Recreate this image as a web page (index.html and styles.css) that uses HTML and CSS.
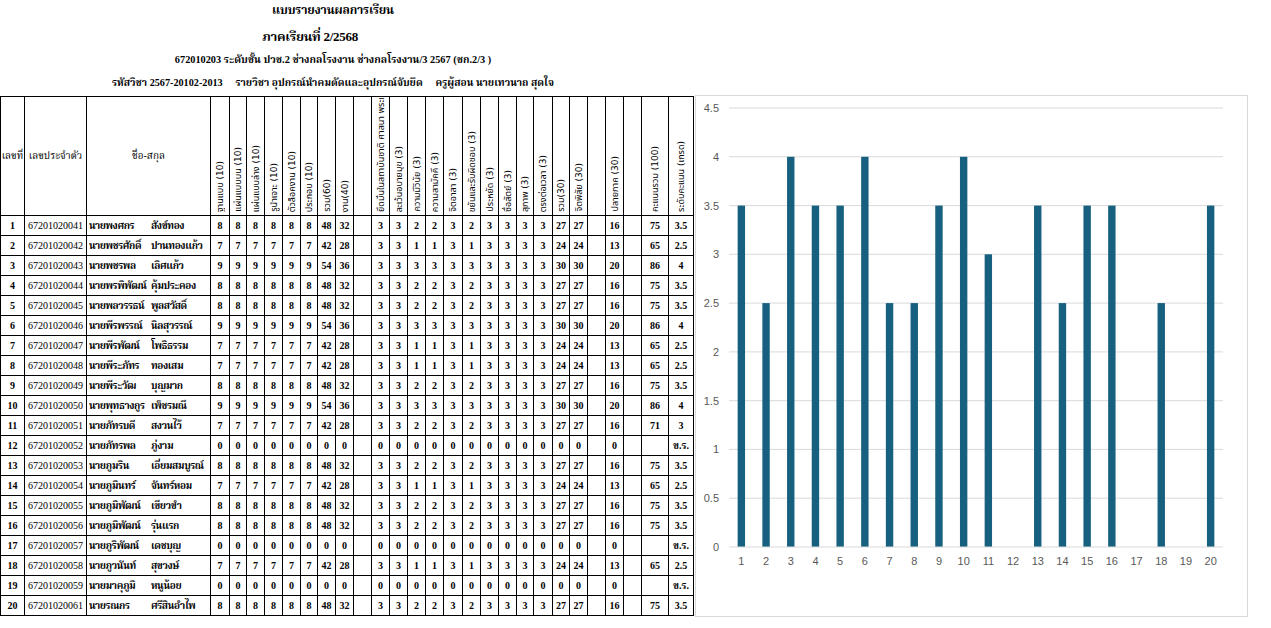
FILE: index.html
```html
<!DOCTYPE html>
<html lang="th">
<head>
<meta charset="utf-8">
<title>แบบรายงานผลการเรียน</title>
<link rel="stylesheet" href="styles.css">
</head>
<body>
<div class="page">
  <div class="report">
    <div class="titles">
      <div class="t1">แบบรายงานผลการเรียน</div>
      <div class="t2">ภาคเรียนที่ 2/2568</div>
      <div class="t3">672010203 ระดับชั้น ปวช.2 ช่างกลโรงงาน ช่างกลโรงงาน/3 2567 (ชก.2/3 )</div>
      <div class="t4">รหัสวิชา 2567-20102-2013 &nbsp;&nbsp;&nbsp; รายวิชา อุปกรณ์นำคมตัดและอุปกรณ์จับยึด &nbsp;&nbsp;&nbsp; ครูผู้สอน นายเทวนาถ สุดใจ</div>
    </div>
    <table class="grid">
      <colgroup>
        <col class="w24"><col class="w62"><col class="w124">
        <col class="w19"><col class="w17"><col class="w18"><col class="w18"><col class="w18"><col class="w17"><col class="w18"><col class="w18">
        <col class="w18">
        <col class="w18"><col class="w18"><col class="w18"><col class="w18"><col class="w19"><col class="w18"><col class="w18"><col class="w18"><col class="w17"><col class="w19">
        <col class="w17"><col class="w18">
        <col class="w18"><col class="w18"><col class="w18">
        <col class="w27"><col class="w25">
      </colgroup>
      <tr class="head">
        <td class="h">เลขที่</td>
        <td class="h">เลขประจำตัว</td>
        <td class="h">ชื่อ-สกุล</td>
        <td><div class="v">ฐานแบบ (10)</div></td>
        <td><div class="v">แผ่นแบบบน (10)</div></td>
        <td><div class="v">แผ่นแบบล่าง (10)</div></td>
        <td><div class="v">รูนำเจาะ (10)</div></td>
        <td><div class="v">ตัวล็อคงาน (10)</div></td>
        <td><div class="v">ประกอบ (10)</div></td>
        <td><div class="v">รวม(60)</div></td>
        <td><div class="v">งาน(40)</div></td>
        <td></td>
        <td><div class="v">ยึดมั่นในสถาบันชาติ ศาสนา พระมหากษัตริย์ (3)</div></td>
        <td><div class="v">ละเว้นอบายมุข (3)</div></td>
        <td><div class="v">ความมีวินัย (3)</div></td>
        <td><div class="v">ความสามัคคี (3)</div></td>
        <td><div class="v">จิตอาสา (3)</div></td>
        <td><div class="v">ขยันและรับผิดชอบ (3)</div></td>
        <td><div class="v">ประหยัด (3)</div></td>
        <td><div class="v">ซื่อสัตย์ (3)</div></td>
        <td><div class="v">สุภาพ (3)</div></td>
        <td><div class="v">ตรงต่อเวลา (3)</div></td>
        <td><div class="v">รวม(30)</div></td>
        <td><div class="v">จิตพิสัย (30)</div></td>
        <td></td>
        <td><div class="v">ปลายภาค (30)</div></td>
        <td></td>
        <td><div class="v">คะแนนรวม (100)</div></td>
        <td><div class="v">ระดับคะแนน (เกรด)</div></td>
      </tr>
      <tr><td>1</td><td class="id">67201020041</td><td class="nm"><div class="nmw"><span>นายพงศกร</span><span>สังข์ทอง</span></div></td><td>8</td><td>8</td><td>8</td><td>8</td><td>8</td><td>8</td><td>48</td><td class="b">32</td><td></td><td>3</td><td>3</td><td>2</td><td>2</td><td>3</td><td>2</td><td>3</td><td>3</td><td>3</td><td>3</td><td>27</td><td class="b">27</td><td></td><td class="b">16</td><td></td><td class="b">75</td><td class="b">3.5</td></tr>
      <tr><td>2</td><td class="id">67201020042</td><td class="nm"><div class="nmw"><span>นายพชรศักดิ์</span><span>ปานทองแก้ว</span></div></td><td>7</td><td>7</td><td>7</td><td>7</td><td>7</td><td>7</td><td>42</td><td class="b">28</td><td></td><td>3</td><td>3</td><td>1</td><td>1</td><td>3</td><td>1</td><td>3</td><td>3</td><td>3</td><td>3</td><td>24</td><td class="b">24</td><td></td><td class="b">13</td><td></td><td class="b">65</td><td class="b">2.5</td></tr>
      <tr><td>3</td><td class="id">67201020043</td><td class="nm"><div class="nmw"><span>นายพชรพล</span><span>เลิศแก้ว</span></div></td><td>9</td><td>9</td><td>9</td><td>9</td><td>9</td><td>9</td><td>54</td><td class="b">36</td><td></td><td>3</td><td>3</td><td>3</td><td>3</td><td>3</td><td>3</td><td>3</td><td>3</td><td>3</td><td>3</td><td>30</td><td class="b">30</td><td></td><td class="b">20</td><td></td><td class="b">86</td><td class="b">4</td></tr>
      <tr><td>4</td><td class="id">67201020044</td><td class="nm"><div class="nmw"><span>นายพรพิพัฒน์</span><span>คุ้มประคอง</span></div></td><td>8</td><td>8</td><td>8</td><td>8</td><td>8</td><td>8</td><td>48</td><td class="b">32</td><td></td><td>3</td><td>3</td><td>2</td><td>2</td><td>3</td><td>2</td><td>3</td><td>3</td><td>3</td><td>3</td><td>27</td><td class="b">27</td><td></td><td class="b">16</td><td></td><td class="b">75</td><td class="b">3.5</td></tr>
      <tr><td>5</td><td class="id">67201020045</td><td class="nm"><div class="nmw"><span>นายพลวรรธน์</span><span>พูลสวัสดิ์</span></div></td><td>8</td><td>8</td><td>8</td><td>8</td><td>8</td><td>8</td><td>48</td><td class="b">32</td><td></td><td>3</td><td>3</td><td>2</td><td>2</td><td>3</td><td>2</td><td>3</td><td>3</td><td>3</td><td>3</td><td>27</td><td class="b">27</td><td></td><td class="b">16</td><td></td><td class="b">75</td><td class="b">3.5</td></tr>
      <tr><td>6</td><td class="id">67201020046</td><td class="nm"><div class="nmw"><span>นายพีรพรรณ์</span><span>นิลสุวรรณ์</span></div></td><td>9</td><td>9</td><td>9</td><td>9</td><td>9</td><td>9</td><td>54</td><td class="b">36</td><td></td><td>3</td><td>3</td><td>3</td><td>3</td><td>3</td><td>3</td><td>3</td><td>3</td><td>3</td><td>3</td><td>30</td><td class="b">30</td><td></td><td class="b">20</td><td></td><td class="b">86</td><td class="b">4</td></tr>
      <tr><td>7</td><td class="id">67201020047</td><td class="nm"><div class="nmw"><span>นายพีรพัฒน์</span><span>โพธิธรรม</span></div></td><td>7</td><td>7</td><td>7</td><td>7</td><td>7</td><td>7</td><td>42</td><td class="b">28</td><td></td><td>3</td><td>3</td><td>1</td><td>1</td><td>3</td><td>1</td><td>3</td><td>3</td><td>3</td><td>3</td><td>24</td><td class="b">24</td><td></td><td class="b">13</td><td></td><td class="b">65</td><td class="b">2.5</td></tr>
      <tr><td>8</td><td class="id">67201020048</td><td class="nm"><div class="nmw"><span>นายพีระภัทร</span><span>ทองเสม</span></div></td><td>7</td><td>7</td><td>7</td><td>7</td><td>7</td><td>7</td><td>42</td><td class="b">28</td><td></td><td>3</td><td>3</td><td>1</td><td>1</td><td>3</td><td>1</td><td>3</td><td>3</td><td>3</td><td>3</td><td>24</td><td class="b">24</td><td></td><td class="b">13</td><td></td><td class="b">65</td><td class="b">2.5</td></tr>
      <tr><td>9</td><td class="id">67201020049</td><td class="nm"><div class="nmw"><span>นายพีระวัฒ</span><span>บุญมาก</span></div></td><td>8</td><td>8</td><td>8</td><td>8</td><td>8</td><td>8</td><td>48</td><td class="b">32</td><td></td><td>3</td><td>3</td><td>2</td><td>2</td><td>3</td><td>2</td><td>3</td><td>3</td><td>3</td><td>3</td><td>27</td><td class="b">27</td><td></td><td class="b">16</td><td></td><td class="b">75</td><td class="b">3.5</td></tr>
      <tr><td>10</td><td class="id">67201020050</td><td class="nm"><div class="nmw"><span>นายพุทธางกูร</span><span>เพ็ชรมณี</span></div></td><td>9</td><td>9</td><td>9</td><td>9</td><td>9</td><td>9</td><td>54</td><td class="b">36</td><td></td><td>3</td><td>3</td><td>3</td><td>3</td><td>3</td><td>3</td><td>3</td><td>3</td><td>3</td><td>3</td><td>30</td><td class="b">30</td><td></td><td class="b">20</td><td></td><td class="b">86</td><td class="b">4</td></tr>
      <tr><td>11</td><td class="id">67201020051</td><td class="nm"><div class="nmw"><span>นายภัทรบดี</span><span>สงวนไว้</span></div></td><td>7</td><td>7</td><td>7</td><td>7</td><td>7</td><td>7</td><td>42</td><td class="b">28</td><td></td><td>3</td><td>3</td><td>2</td><td>2</td><td>3</td><td>2</td><td>3</td><td>3</td><td>3</td><td>3</td><td>27</td><td class="b">27</td><td></td><td class="b">16</td><td></td><td class="b">71</td><td class="b">3</td></tr>
      <tr><td>12</td><td class="id">67201020052</td><td class="nm"><div class="nmw"><span>นายภัทรพล</span><span>ภู่งาม</span></div></td><td>0</td><td>0</td><td>0</td><td>0</td><td>0</td><td>0</td><td>0</td><td class="b">0</td><td></td><td>0</td><td>0</td><td>0</td><td>0</td><td>0</td><td>0</td><td>0</td><td>0</td><td>0</td><td>0</td><td>0</td><td class="b">0</td><td></td><td class="b">0</td><td></td><td class="b"></td><td class="b">ข.ร.</td></tr>
      <tr><td>13</td><td class="id">67201020053</td><td class="nm"><div class="nmw"><span>นายภูมริน</span><span>เอี่ยมสมบูรณ์</span></div></td><td>8</td><td>8</td><td>8</td><td>8</td><td>8</td><td>8</td><td>48</td><td class="b">32</td><td></td><td>3</td><td>3</td><td>2</td><td>2</td><td>3</td><td>2</td><td>3</td><td>3</td><td>3</td><td>3</td><td>27</td><td class="b">27</td><td></td><td class="b">16</td><td></td><td class="b">75</td><td class="b">3.5</td></tr>
      <tr><td>14</td><td class="id">67201020054</td><td class="nm"><div class="nmw"><span>นายภูมินทร์</span><span>จันทร์หอม</span></div></td><td>7</td><td>7</td><td>7</td><td>7</td><td>7</td><td>7</td><td>42</td><td class="b">28</td><td></td><td>3</td><td>3</td><td>1</td><td>1</td><td>3</td><td>1</td><td>3</td><td>3</td><td>3</td><td>3</td><td>24</td><td class="b">24</td><td></td><td class="b">13</td><td></td><td class="b">65</td><td class="b">2.5</td></tr>
      <tr><td>15</td><td class="id">67201020055</td><td class="nm"><div class="nmw"><span>นายภูมิพัฒน์</span><span>เขียวขำ</span></div></td><td>8</td><td>8</td><td>8</td><td>8</td><td>8</td><td>8</td><td>48</td><td class="b">32</td><td></td><td>3</td><td>3</td><td>2</td><td>2</td><td>3</td><td>2</td><td>3</td><td>3</td><td>3</td><td>3</td><td>27</td><td class="b">27</td><td></td><td class="b">16</td><td></td><td class="b">75</td><td class="b">3.5</td></tr>
      <tr><td>16</td><td class="id">67201020056</td><td class="nm"><div class="nmw"><span>นายภูมิพัฒน์</span><span>รุ่นแรก</span></div></td><td>8</td><td>8</td><td>8</td><td>8</td><td>8</td><td>8</td><td>48</td><td class="b">32</td><td></td><td>3</td><td>3</td><td>2</td><td>2</td><td>3</td><td>2</td><td>3</td><td>3</td><td>3</td><td>3</td><td>27</td><td class="b">27</td><td></td><td class="b">16</td><td></td><td class="b">75</td><td class="b">3.5</td></tr>
      <tr><td>17</td><td class="id">67201020057</td><td class="nm"><div class="nmw"><span>นายภูริพัฒน์</span><span>เดชบุญ</span></div></td><td>0</td><td>0</td><td>0</td><td>0</td><td>0</td><td>0</td><td>0</td><td class="b">0</td><td></td><td>0</td><td>0</td><td>0</td><td>0</td><td>0</td><td>0</td><td>0</td><td>0</td><td>0</td><td>0</td><td>0</td><td class="b">0</td><td></td><td class="b">0</td><td></td><td class="b"></td><td class="b">ข.ร.</td></tr>
      <tr><td>18</td><td class="id">67201020058</td><td class="nm"><div class="nmw"><span>นายภูวนันท์</span><span>สุขวงษ์</span></div></td><td>7</td><td>7</td><td>7</td><td>7</td><td>7</td><td>7</td><td>42</td><td class="b">28</td><td></td><td>3</td><td>3</td><td>1</td><td>1</td><td>3</td><td>1</td><td>3</td><td>3</td><td>3</td><td>3</td><td>24</td><td class="b">24</td><td></td><td class="b">13</td><td></td><td class="b">65</td><td class="b">2.5</td></tr>
      <tr><td>19</td><td class="id">67201020059</td><td class="nm"><div class="nmw"><span>นายมาคุภูมิ</span><span>หนูน้อย</span></div></td><td>0</td><td>0</td><td>0</td><td>0</td><td>0</td><td>0</td><td>0</td><td class="b">0</td><td></td><td>0</td><td>0</td><td>0</td><td>0</td><td>0</td><td>0</td><td>0</td><td>0</td><td>0</td><td>0</td><td>0</td><td class="b">0</td><td></td><td class="b">0</td><td></td><td class="b"></td><td class="b">ข.ร.</td></tr>
      <tr><td>20</td><td class="id">67201020061</td><td class="nm"><div class="nmw"><span>นายรณกร</span><span>ศรีสินอำไพ</span></div></td><td>8</td><td>8</td><td>8</td><td>8</td><td>8</td><td>8</td><td>48</td><td class="b">32</td><td></td><td>3</td><td>3</td><td>2</td><td>2</td><td>3</td><td>2</td><td>3</td><td>3</td><td>3</td><td>3</td><td>27</td><td class="b">27</td><td></td><td class="b">16</td><td></td><td class="b">75</td><td class="b">3.5</td></tr>
    </table>
  </div>
  <div class="chart">
    <svg class="plot" width="551" height="520" viewBox="0 0 551 520">
      <g class="gridlines">
        <line x1="33" y1="12" x2="527" y2="12"/>
        <line x1="33" y1="60.8" x2="527" y2="60.8"/>
        <line x1="33" y1="109.6" x2="527" y2="109.6"/>
        <line x1="33" y1="158.3" x2="527" y2="158.3"/>
        <line x1="33" y1="207.1" x2="527" y2="207.1"/>
        <line x1="33" y1="255.9" x2="527" y2="255.9"/>
        <line x1="33" y1="304.7" x2="527" y2="304.7"/>
        <line x1="33" y1="353.4" x2="527" y2="353.4"/>
        <line x1="33" y1="402.2" x2="527" y2="402.2"/>
      </g>
      <g class="bars">
        <rect x="41.65" y="109.6" width="7.4" height="341.4"/>
        <rect x="66.35" y="207.1" width="7.4" height="243.9"/>
        <rect x="91.05" y="60.8" width="7.4" height="390.2"/>
        <rect x="115.75" y="109.6" width="7.4" height="341.4"/>
        <rect x="140.45" y="109.6" width="7.4" height="341.4"/>
        <rect x="165.15" y="60.8" width="7.4" height="390.2"/>
        <rect x="189.85" y="207.1" width="7.4" height="243.9"/>
        <rect x="214.55" y="207.1" width="7.4" height="243.9"/>
        <rect x="239.25" y="109.6" width="7.4" height="341.4"/>
        <rect x="263.95" y="60.8" width="7.4" height="390.2"/>
        <rect x="288.65" y="158.3" width="7.4" height="292.7"/>
        <rect x="338.05" y="109.6" width="7.4" height="341.4"/>
        <rect x="362.75" y="207.1" width="7.4" height="243.9"/>
        <rect x="387.45" y="109.6" width="7.4" height="341.4"/>
        <rect x="412.15" y="109.6" width="7.4" height="341.4"/>
        <rect x="461.55" y="207.1" width="7.4" height="243.9"/>
        <rect x="510.95" y="109.6" width="7.4" height="341.4"/>
      </g>
      <line class="axis" x1="33" y1="451" x2="527" y2="451"/>
      <g class="ylabels">
        <text x="23" y="16">4.5</text>
        <text x="23" y="64.8">4</text>
        <text x="23" y="113.6">3.5</text>
        <text x="23" y="162.3">3</text>
        <text x="23" y="211.1">2.5</text>
        <text x="23" y="259.9">2</text>
        <text x="23" y="308.7">1.5</text>
        <text x="23" y="357.4">1</text>
        <text x="23" y="406.2">0.5</text>
        <text x="23" y="455">0</text>
      </g>
      <g class="xlabels">
        <text x="45.35" y="469">1</text>
        <text x="70.05" y="469">2</text>
        <text x="94.75" y="469">3</text>
        <text x="119.45" y="469">4</text>
        <text x="144.15" y="469">5</text>
        <text x="168.85" y="469">6</text>
        <text x="193.55" y="469">7</text>
        <text x="218.25" y="469">8</text>
        <text x="242.95" y="469">9</text>
        <text x="267.65" y="469">10</text>
        <text x="292.35" y="469">11</text>
        <text x="317.05" y="469">12</text>
        <text x="341.75" y="469">13</text>
        <text x="366.45" y="469">14</text>
        <text x="391.15" y="469">15</text>
        <text x="415.85" y="469">16</text>
        <text x="440.55" y="469">17</text>
        <text x="465.25" y="469">18</text>
        <text x="489.95" y="469">19</text>
        <text x="514.65" y="469">20</text>
      </g>
    </svg>
  </div>
</div>
</body>
</html>
```
FILE: styles.css
```css
html, body {
  margin: 0;
  padding: 0;
  background: #fff;
}
body {
  font-family: "Liberation Serif", "Noto Serif Thai", "Noto Sans Thai", "Tlwg Typo", serif;
  color: #000;
}
.page {
  display: flex;
  align-items: flex-start;
  width: 1271px;
  height: 628px;
  overflow: hidden;
}
.report {
  width: 694px;
  flex: none;
}
.titles {
  width: 666px;
  height: 96px;
  text-align: center;
  font-weight: bold;
  white-space: nowrap;
}
.t1 {
  height: 20px;
  line-height: 20px;
  font-size: 12px;
  letter-spacing: -0.2px;
}
.t2 {
  margin-top: 7px;
  height: 20px;
  line-height: 20px;
  font-size: 13px;
  letter-spacing: -0.3px;
  padding-right: 46px;
}
.t3 {
  margin-top: 3px;
  height: 20px;
  line-height: 20px;
  font-size: 10.3px;
}
.t4 {
  margin-top: 3px;
  height: 20px;
  line-height: 20px;
  font-size: 10.2px;
}
.grid {
  border-collapse: collapse;
  table-layout: fixed;
  width: 693px;
  font-size: 10px;
}
.grid td {
  border: 1px solid #000;
  padding: 0;
  text-align: center;
  vertical-align: middle;
  white-space: nowrap;
  overflow: hidden;
  font-weight: bold;
}
.grid tr {
  height: 20px;
}
.grid tr.head {
  height: 119px;
}
.grid tr.head td {
  vertical-align: bottom;
  padding-bottom: 3px;
  font-weight: normal;
}
.grid tr.head td.h {
  vertical-align: middle;
  padding-bottom: 0;
  font-size: 10px;
}
.v {
  writing-mode: vertical-rl;
  transform: rotate(180deg);
  white-space: nowrap;
  overflow: hidden;
  max-height: 114px;
  margin: 0 auto;
  font-family: "DejaVu Sans", "Noto Sans Thai", sans-serif;
  font-size: 9px;
  line-height: 14px;
}
.grid td.id {
  font-weight: normal;
}
.grid td.nm {
  text-align: left;
  font-weight: bold;
}
.nmw {
  display: grid;
  grid-template-columns: 62px 1fr;
  padding-left: 2px;
  letter-spacing: -0.4px;
}
.nmw span {
  overflow: hidden;
}
.w17 { width: 17px; }
.w18 { width: 18px; }
.w19 { width: 19px; }
.w24 { width: 24px; }
.w25 { width: 25px; }
.w27 { width: 27px; }
.w62 { width: 62px; }
.w124 { width: 124px; }
.chart {
  flex: none;
  margin-top: 95px;
  margin-left: 1px;
  width: 551px;
  height: 520px;
  border: 1px solid #d9d9d9;
}
.plot {
  display: block;
}
.gridlines line,
.axis {
  stroke: #d9d9d9;
  stroke-width: 1;
}
.bars rect {
  fill: #17607f;
}
.ylabels text,
.xlabels text {
  font-family: "Liberation Sans", Arial, sans-serif;
  font-size: 11px;
  fill: #595959;
}
.ylabels text {
  text-anchor: end;
}
.xlabels text {
  text-anchor: middle;
}
```
